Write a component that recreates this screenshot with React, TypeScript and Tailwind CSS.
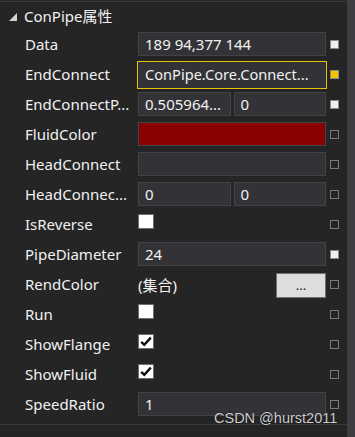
import React from "react";

type Sq = "filled" | "yellow" | "empty";

const FONT = { fontFamily: '"Noto Sans", "Noto Sans CJK SC", sans-serif' };

function Square({ kind }: { kind: Sq }) {
  const cls =
    kind === "filled"
      ? "bg-[#f0f0f0] border-[#8a8a8a]"
      : kind === "yellow"
      ? "bg-[#f5c400] border-[#8a8a8a]"
      : "bg-transparent border-[#7a7a7a]";
  return <div className={`mt-[9px] w-[9px] h-[9px] border-[1.5px] box-border ${cls}`} />;
}

function Box({ children, focused, bg }: { children?: React.ReactNode; focused?: boolean; bg?: string }) {
  if (focused) {
    return (
      <div className="-mx-px h-[28px] border border-[#e8c400] bg-[#333337] flex items-center px-[7px] text-[14.6px] text-[#f1f1f1] whitespace-nowrap overflow-hidden">
        {children}
      </div>
    );
  }
  return (
    <div
      className={`mt-px h-[24px] border border-[#434346] ${bg ?? "bg-[#333337]"} flex items-center px-[6px] text-[15px] text-[#f1f1f1] whitespace-nowrap overflow-hidden`}
    >
      {children}
    </div>
  );
}

function Check({ checked }: { checked?: boolean }) {
  return (
    <div className="mt-[3px] w-[16px] h-[15px] bg-white border border-[#6e6e6e] flex items-center justify-center">
      {checked && (
        <svg width="14" height="13" viewBox="0 0 14 13">
          <path d="M2.2 6.8 L5.3 9.8 L11.8 2.6" fill="none" stroke="#111" strokeWidth="2.4" />
        </svg>
      )}
    </div>
  );
}

function Row({ label, sq, children }: { label: string; sq: Sq; children: React.ReactNode }) {
  return (
    <div className="h-[30px] flex items-start pl-[25px]">
      <div className="w-[113px] h-[27px] leading-[27px] text-[15px] text-[#f1f1f1] whitespace-nowrap overflow-hidden">
        {label}
      </div>
      <div className="w-[188px]">{children}</div>
      <div className="w-[4px]" />
      <Square kind={sq} />
    </div>
  );
}

export default function App() {
  return (
    <div className="relative w-[355px] h-[437px] bg-[#252526] flex overflow-hidden" style={FONT}>
      <div className="w-[347px] flex flex-col">
        <div className="mt-px h-px bg-[#3a3a3c]" />
        <div className="h-[29px] flex items-center pl-[9px] gap-[7px]">
          <svg width="8" height="8" viewBox="0 0 8 8" className="mt-[1px]">
            <polygon points="8,0 8,8 0,8" fill="#d4d4d4" />
          </svg>
          <span className="text-[15px] text-[#f1f1f1] leading-none">ConPipe属性</span>
        </div>
        <Row label="Data" sq="filled">
          <Box>189 94,377 144</Box>
        </Row>
        <Row label="EndConnect" sq="yellow">
          <Box focused>ConPipe.Core.Connect...</Box>
        </Row>
        <Row label="EndConnectP..." sq="filled">
          <div className="grid grid-cols-2 gap-[3px]">
            <Box>0.505964...</Box>
            <Box>0</Box>
          </div>
        </Row>
        <Row label="FluidColor" sq="empty">
          <Box bg="bg-[#8b0000]" />
        </Row>
        <Row label="HeadConnect" sq="empty">
          <Box />
        </Row>
        <Row label="HeadConnec..." sq="empty">
          <div className="grid grid-cols-2 gap-[3px]">
            <Box>0</Box>
            <Box>0</Box>
          </div>
        </Row>
        <Row label="IsReverse" sq="empty">
          <Check />
        </Row>
        <Row label="PipeDiameter" sq="filled">
          <Box>24</Box>
        </Row>
        <Row label="RendColor" sq="empty">
          <div className="flex items-center justify-between">
            <span className="h-[28px] leading-[28px] text-[15px] text-[#f1f1f1]">(集合)</span>
            <div className="mt-px w-[50px] h-[25px] bg-[#dddddd] border border-[#707070] flex items-center justify-center text-[13px] text-[#1e1e1e] leading-none">
              ...
            </div>
          </div>
        </Row>
        <Row label="Run" sq="empty">
          <Check />
        </Row>
        <Row label="ShowFlange" sq="empty">
          <Check checked />
        </Row>
        <Row label="ShowFluid" sq="empty">
          <Check checked />
        </Row>
        <Row label="SpeedRatio" sq="empty">
          <Box>1</Box>
        </Row>
        <div className="mt-[3px] h-px bg-[#3a3a3c]" />
      </div>
      <div className="w-[8px] bg-[#3e3e42]" />
      <div
        className="absolute left-[214px] top-[411px] text-[14.5px] text-[#cfcfcf] leading-none whitespace-nowrap"
        style={{ fontFamily: '"Liberation Sans", Arial, sans-serif', textShadow: "0 0 1px #000" }}
      >
        CSDN @hurst2011
      </div>
    </div>
  );
}
